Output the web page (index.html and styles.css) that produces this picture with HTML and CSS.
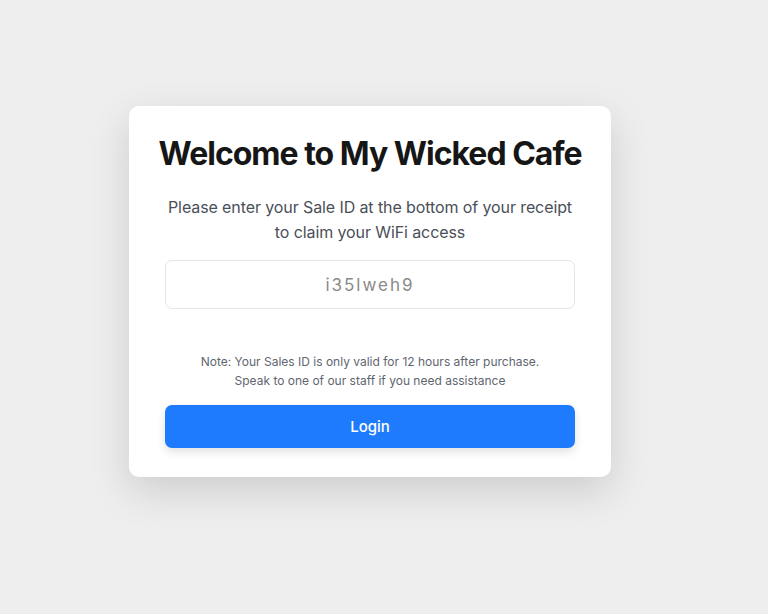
FILE: index.html
```html
<!DOCTYPE html>
<html lang="en">
<head>
<meta charset="utf-8">
<title>Welcome to My Wicked Cafe</title>
<link rel="stylesheet" href="styles.css">
</head>
<body>
<main class="page">
  <form class="card" onsubmit="return false;">
    <h1 class="title">Welcome to My Wicked Cafe</h1>
    <p class="subtitle">Please enter your Sale ID at the bottom of your receipt<br>to claim your WiFi access</p>
    <input class="sale-input" type="text" placeholder="i35lweh9">
    <p class="note">Note: Your Sales ID is only valid for 12 hours after purchase.<br>Speak to one of our staff if you need assistance</p>
    <button class="login" type="submit">Login</button>
  </form>
</main>
</body>
</html>
```

FILE: styles.css
```css
* { box-sizing: border-box; }
html, body {
  margin: 0;
  padding: 0;
  background: #eeeeee;
  font-family: Inter, "Noto Sans", sans-serif;
}
.page {
  width: 768px;
  height: 614px;
  display: flex;
  align-items: flex-start;
  justify-content: flex-start;
  padding: 106px 0 0 129px;
}
.card {
  width: 482px;
  height: 371px;
  background: #ffffff;
  border-radius: 10px;
  box-shadow: 0 14px 40px rgba(0, 0, 0, 0.14);
  padding: 28px 36px 0;
  display: flex;
  flex-direction: column;
  align-items: center;
}
.title {
  margin: 0;
  font-size: 32px;
  font-weight: 700;
  letter-spacing: -1px;
  color: #161616;
  line-height: 40px;
  white-space: nowrap;
}
.subtitle {
  margin: 21px 0 0;
  font-size: 16px;
  line-height: 25px;
  color: #4a4f58;
  text-align: center;
  letter-spacing: -0.1px;
}
.sale-input {
  margin-top: 15px;
  width: 410px;
  height: 49px;
  border: 1px solid #e3e6ea;
  border-radius: 7px;
  text-align: center;
  font-family: Inter, sans-serif;
  font-size: 17px;
  letter-spacing: 2px;
  color: #333;
  outline: none;
}
.sale-input::placeholder { color: #8a8a8a; }
.note {
  margin: 43px 0 0;
  font-size: 12px;
  line-height: 19px;
  color: #5f6670;
  text-align: center;
}
.login {
  margin-top: 15px;
  width: 410px;
  height: 43px;
  border: none;
  border-radius: 7px;
  background: #1f7bfd;
  color: #ffffff;
  font-family: Inter, sans-serif;
  font-size: 15px;
  font-weight: 500;
  box-shadow: 0 4px 10px rgba(0, 0, 0, 0.12);
  cursor: pointer;
}
```
